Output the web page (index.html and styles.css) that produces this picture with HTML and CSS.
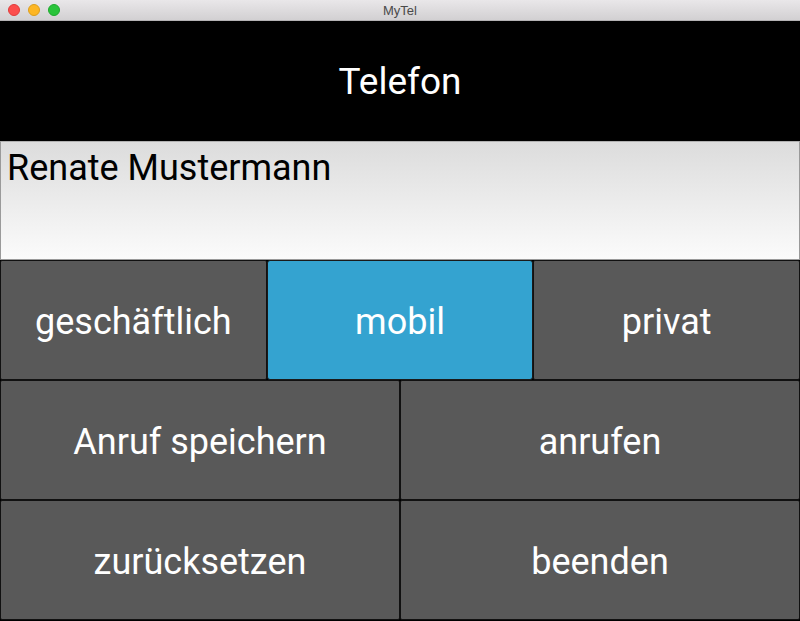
FILE: index.html
```html
<!DOCTYPE html>
<html>
<head>
<meta charset="utf-8">
<link rel="stylesheet" href="styles.css">
</head>
<body>
<div class="window">
  <div class="titlebar">
    <div class="lights">
      <span class="light red"></span>
      <span class="light yellow"></span>
      <span class="light green"></span>
    </div>
    <div class="title">MyTel</div>
  </div>
  <div class="header">Telefon</div>
  <div class="field">Renate Mustermann</div>
  <div class="row three">
    <div class="btn">geschäftlich</div>
    <div class="btn active">mobil</div>
    <div class="btn">privat</div>
  </div>
  <div class="row two">
    <div class="btn">Anruf speichern</div>
    <div class="btn">anrufen</div>
  </div>
  <div class="row two">
    <div class="btn">zurücksetzen</div>
    <div class="btn">beenden</div>
  </div>
</div>
</body>
</html>
```

FILE: styles.css
```css
html, body {
  margin: 0;
  padding: 0;
  background: #000;
}
.window {
  width: 800px;
  height: 621px;
  display: flex;
  flex-direction: column;
  font-family: Roboto, "Noto Sans", sans-serif;
  overflow: hidden;
}
.titlebar {
  height: 20px;
  border-bottom: 1px solid #b4b2b4;
  background: linear-gradient(#e9e7e9, #d2d0d2);
  position: relative;
  display: flex;
  align-items: center;
  justify-content: center;
}
.lights {
  position: absolute;
  left: 8px;
  top: 4px;
  display: flex;
  gap: 8px;
}
.light {
  width: 12px;
  height: 12px;
  border-radius: 50%;
  box-sizing: border-box;
}
.red { background: #fc4d4c; border: 1px solid #e03c3b; }
.yellow { background: #fdb624; border: 1px solid #dc9e1c; }
.green { background: #2ac43b; border: 1px solid #1eaa2e; }
.title {
  font-family: "Liberation Sans", Arial, sans-serif;
  font-size: 13px;
  color: #4a4a4a;
}
.header {
  height: 120px;
  background: #000;
  color: #fff;
  font-size: 37px;
  display: flex;
  align-items: center;
  justify-content: center;
}
.field {
  box-sizing: border-box;
  height: 119px;
  border: 1px solid #9a9a9a;
  border-top-color: #b0b0b0;
  background: linear-gradient(#dcdcdc, #fbfbfb);
  color: #000;
  font-size: 36px;
  padding: 6px 0 0 6px;
  line-height: 40px;
}
.row {
  height: 120px;
  display: grid;
}
.row.three { grid-template-columns: 1fr 1fr 1fr; }
.row.two { grid-template-columns: 1fr 1fr; }
.btn {
  background: #595959;
  border: 1px solid #111;
  border-radius: 2px;
  color: #fff;
  font-size: 36px;
  padding-top: 3px;
  display: flex;
  align-items: center;
  justify-content: center;
}
.btn.active {
  background: #34a3d0;
  border-color: #1a1a1a;
  box-shadow: inset 0 0 0 1px #34a3d0;
  border-radius: 3px;
}
```
